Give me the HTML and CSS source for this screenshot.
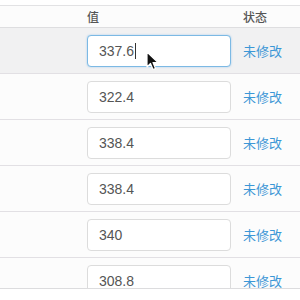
FILE: index.html
```html
<!DOCTYPE html>
<html lang="zh-CN">
<head>
    <meta charset="UTF-8">
    <meta name="viewport" content="width=device-width, initial-scale=1.0">
    <title>值 状态</title>
    <link rel="stylesheet" href="styles.css">
</head>
<body>
    <div class="page">
        <div class="topbar"></div>
        <div class="scroller">
            <table class="grid">
                <thead>
                    <tr>
                        <th class="col-name"></th>
                        <th class="col-value">值</th>
                        <th class="col-state">状态</th>
                    </tr>
                </thead>
                <tbody>
                    <tr class="hover">
                        <td></td>
                        <td>
                            <div class="field focus">337.6<span class="caret"></span></div>
                        </td>
                        <td class="state">未修改</td>
                    </tr>
                    <tr>
                        <td></td>
                        <td><div class="field">322.4</div></td>
                        <td class="state">未修改</td>
                    </tr>
                    <tr>
                        <td></td>
                        <td><div class="field">338.4</div></td>
                        <td class="state">未修改</td>
                    </tr>
                    <tr>
                        <td></td>
                        <td><div class="field">338.4</div></td>
                        <td class="state">未修改</td>
                    </tr>
                    <tr>
                        <td></td>
                        <td><div class="field">340</div></td>
                        <td class="state">未修改</td>
                    </tr>
                    <tr>
                        <td></td>
                        <td><div class="field">308.8</div></td>
                        <td class="state">未修改</td>
                    </tr>
                </tbody>
            </table>
        </div>
        <div class="footer"></div>

        <!-- mouse pointer over the first input -->
        <svg class="pointer" width="14" height="20" viewBox="0 0 14 20">
            <path d="M1 1 L1 16 L4.5 12.5 L7 18.5 L9.5 17.5 L7 11.5 L12 11.5 Z" fill="#111" stroke="#fff" stroke-width="1.2" stroke-linejoin="round"/>
        </svg>
    </div>
</body>
</html>
```

FILE: styles.css
```css
body {
    margin: 0;
    background: #fcfcfc;
    font-family: "Liberation Sans", "Noto Sans CJK SC", sans-serif;
    overflow: hidden;
}

.page {
    position: relative;
    width: 300px;
    height: 300px;
    overflow: hidden;
}

.topbar {
    height: 5px;
    background: #fff;
    border-bottom: 1px solid #e2e2e4;
}

.scroller {
    height: 282px;
    overflow: hidden;
    border-bottom: 1px solid #dcdcde;
}

.footer {
    height: 12px;
    background: #fff;
}

.grid {
    border-collapse: collapse;
    width: 340px;
    table-layout: fixed;
}

.grid th {
    height: 21px;
    padding: 0 8px;
    text-align: left;
    font-family: "Noto Sans CJK SC", sans-serif;
    font-size: 12px;
    font-weight: 500;
    color: #555;
    border-bottom: 1px solid #dedee0;
}

.col-name {
    width: 63px;
}

.col-value {
    width: 140px;
}

.grid td {
    height: 45px;
    padding: 0 8px;
    border-bottom: 1px solid #e2e0e4;
    vertical-align: middle;
}

.grid tr.hover td {
    background: #f1f1f2;
}

.field {
    display: flex;
    align-items: center;
    width: 144px;
    height: 32px;
    box-sizing: border-box;
    padding-left: 11px;
    border: 1px solid #dcdcdc;
    border-radius: 4px;
    background: #fff;
    font-size: 14px;
    color: #555;
}

.field.focus {
    border-color: #7cb9e4;
    box-shadow: 0 0 2px rgba(102, 175, 233, 0.6);
}

.caret {
    width: 1px;
    height: 16px;
    margin-left: 1px;
    background: #333;
}

.state {
    font-family: "Noto Sans CJK SC", sans-serif;
    font-size: 13px;
    color: #3c97d6;
}

.pointer {
    position: absolute;
    left: 146px;
    top: 51px;
}
```
